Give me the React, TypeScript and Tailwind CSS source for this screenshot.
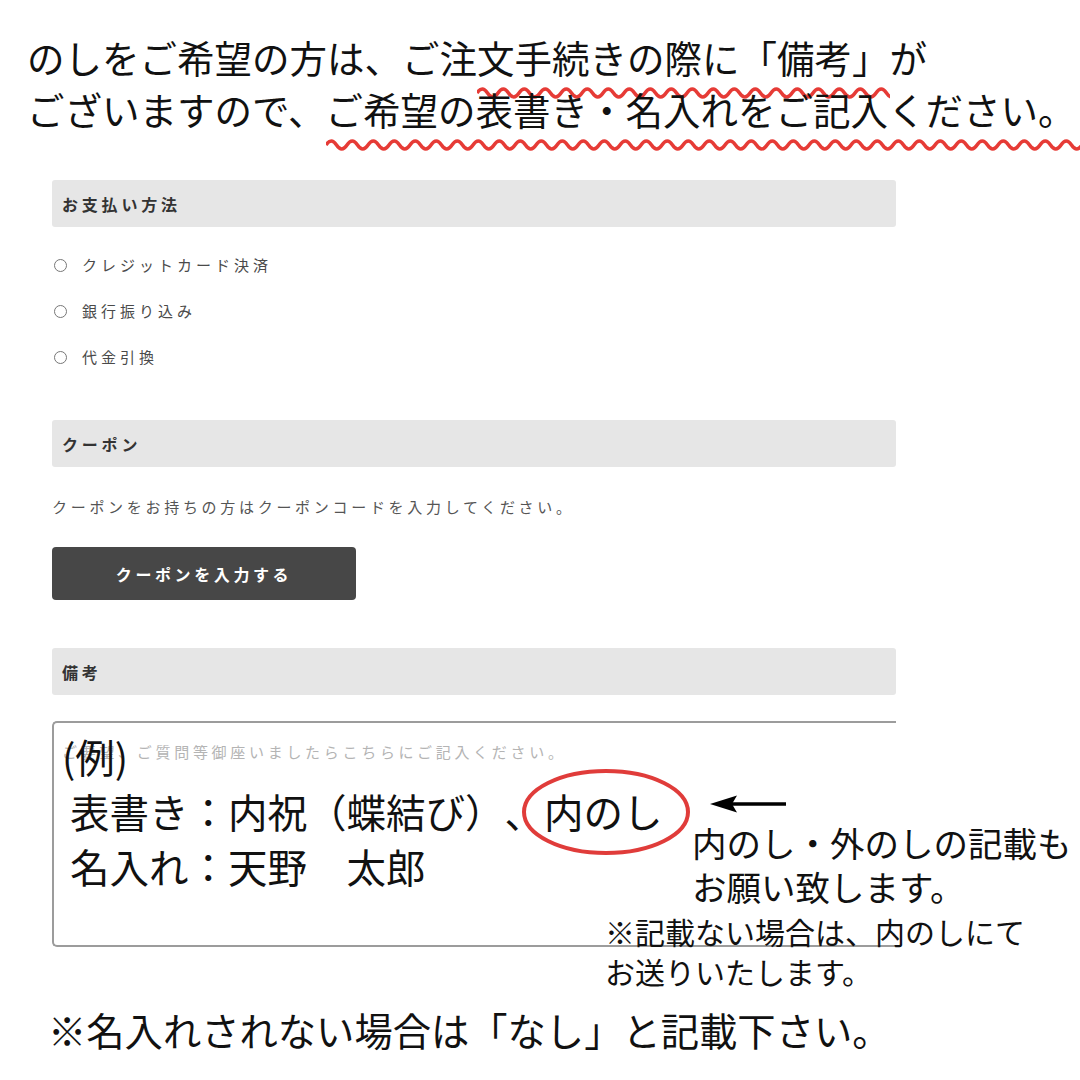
const font = "font-['Noto_Sans_CJK_JP','Noto_Sans',sans-serif]";

function wavePath(width: number) {
    let d = "M0 8 Q5.25 0 10.5 8";
    for (let x = 21; x <= width + 21; x += 10.5) d += ` T${x} 8`;
    return d;
}

function Squiggle({ className }: { className: string }) {
    return (
        <svg className={className} height="16" aria-hidden="true">
            <path d={wavePath(820)} fill="none" stroke="#e63b36" strokeWidth="3.5" />
        </svg>
    );
}

function SectionBar({ title }: { title: string }) {
    return (
        <div className="flex h-[47px] items-center rounded-[3px] bg-[#e6e6e6] px-[10px] text-[16px] font-bold tracking-[3.8px] text-[#333]">
            {title}
        </div>
    );
}

const payments = ["クレジットカード決済", "銀行振り込み", "代金引換"];

export default function App() {
    return (
        <div className={`${font} relative min-h-[1080px] w-full overflow-hidden bg-white text-[#111] [text-spacing-trim:space-all]`}>
            {/* lead text */}
            <div className="pl-[27px] pt-[31px] text-[37.5px] leading-[52px] whitespace-nowrap">
                <div>
                    のしをご希望の方は、ご注
                    <span className="relative inline-block">
                        文手続きの際に「備考」
                        <Squiggle className="absolute left-0 top-[54px] w-full" />
                    </span>
                    が
                </div>
                <div>
                    ございますので、
                    <span className="relative inline-block">
                        ご希望の表書き・名入れをご記入ください。
                        <Squiggle className="absolute left-0 top-[54px] w-[calc(100%+24px)]" />
                    </span>
                </div>
            </div>

            {/* form capture */}
            <div className="mt-[45px] ml-[52px] w-[844px]">
                <SectionBar title="お支払い方法" />
                <ul className="mt-[15px]">
                    {payments.map((p) => (
                        <li key={p} className="flex h-[46px] items-center gap-[15px] pl-[2px] text-[15px] tracking-[4px] text-[#4a4a4a]">
                            <span className="h-[13px] w-[13px] rounded-full border-[1.5px] border-[#777]" />
                            {p}
                        </li>
                    ))}
                </ul>

                <div className="mt-[40px]">
                    <SectionBar title="クーポン" />
                </div>
                <p className="mt-[28px] text-[15px] leading-[24px] tracking-[3.7px] text-[#555]">
                    クーポンをお持ちの方はクーポンコードを入力してください。
                </p>
                <button className="mt-[28px] flex h-[53px] w-[304px] items-center justify-center rounded-[4px] bg-[#474747] text-[16px] font-bold tracking-[3.6px] text-white">
                    クーポンを入力する
                </button>

                <div className="mt-[48px]">
                    <SectionBar title="備考" />
                </div>

                <div className="relative mt-[26px] h-[226px] rounded-l-[5px] border-2 border-r-0 border-[#9c9c9c] pl-[16px] pt-[5px]">
                    <span className="absolute left-[8px] top-[17px] text-[15px] leading-[24px] tracking-[3.7px] text-[#b4b4b4]">
                        ご要望、ご質問等御座いましたらこちらにご記入ください。
                    </span>
                    <div className="relative text-[39.5px] leading-[55px] whitespace-nowrap">
                        <div className="-ml-[8px]">(例)</div>
                        <div>表書き：内祝（蝶結び）、内のし</div>
                        <div>名入れ：天野　太郎</div>
                    </div>

                    {/* callouts */}
                    <svg className="absolute left-[466px] top-[44px]" width="176" height="92" aria-hidden="true">
                        <ellipse cx="86" cy="45" rx="82" ry="41" fill="none" stroke="#e03c3a" strokeWidth="4" />
                    </svg>
                    <svg className="absolute left-[654px] top-[71px]" width="80" height="20" aria-hidden="true">
                        <line x1="20" y1="10" x2="78" y2="10" stroke="#000" strokeWidth="3.5" />
                        <path d="M2 10 L29 1.5 L24 10 L29 18.5 Z" fill="#000" />
                    </svg>
                    <div className="absolute left-[638px] top-[97px] text-[34.5px] leading-[44px] whitespace-nowrap">
                        <div>内のし・外のしの記載も</div>
                        <div>お願い致します。</div>
                    </div>
                    <div className="absolute left-[551px] top-[188px] text-[30px] leading-[40px] whitespace-nowrap">
                        <div>※記載ない場合は、内のしにて</div>
                        <div>お送りいたします。</div>
                    </div>
                </div>
            </div>

            <p className="mt-[58px] pl-[48px] text-[38.3px] leading-[50px] whitespace-nowrap">
                ※名入れされない場合は「なし」と記載下さい。
            </p>
        </div>
    );
}
